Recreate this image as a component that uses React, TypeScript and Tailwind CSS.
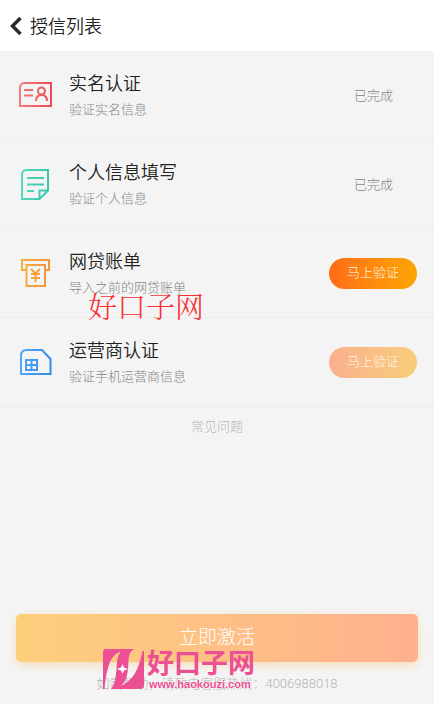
import type { ReactNode } from 'react';

type Row = {
  title: string;
  note: string;
  icon: ReactNode;
  state: 'done' | 'ready' | 'waiting';
};

function Gradient({ id, from, to }: { id: string; from: string; to: string }) {
  return (
    <defs>
      <linearGradient id={id} x1="0" y1="0" x2="36" y2="0" gradientUnits="userSpaceOnUse">
        <stop offset="0" stopColor={from} />
        <stop offset="1" stopColor={to} />
      </linearGradient>
    </defs>
  );
}

function IdCardIcon() {
  return (
    <svg viewBox="0 0 36 36" className="size-9 shrink-0" fill="none" stroke="url(#red)" strokeWidth="2" aria-hidden="true">
      <Gradient id="red" from="#f5807c" to="#e8484e" />
      <path d="M7 6H33V29H2V11Q2 6 7 6Z" />
      <path d="M6 13H15M6 18.500H15" />
      <circle cx="23.500" cy="14" r="3.500" />
      <path d="M18 24Q18 18 23.500 18Q29 18 29 24" />
    </svg>
  );
}

function NoteIcon() {
  return (
    <svg viewBox="0 0 36 36" className="size-9 shrink-0" fill="none" stroke="url(#green)" strokeWidth="2" aria-hidden="true">
      <Gradient id="green" from="#5ad9c2" to="#35c2a8" />
      <path d="M9 4H30V24.500L21.500 33H4V9Q4 4 9 4Z" />
      <path d="M9 12H26M9 18.500H26M9 25H16M21.500 33V24.500H30" />
    </svg>
  );
}

function BillIcon() {
  return (
    <svg viewBox="0 0 36 36" className="size-9 shrink-0" fill="none" stroke="url(#amber)" strokeWidth="2" aria-hidden="true">
      <Gradient id="amber" from="#f9b13c" to="#f38f3c" />
      <path d="M8 15H4V5H31V15H27" />
      <path d="M8.500 10H27V31H8.500Z" />
      <path d="M13 14L17.500 18.500L22 14M13 19H22M13 23H22M17.500 18.500V27" />
    </svg>
  );
}

function SimIcon() {
  return (
    <svg viewBox="0 0 36 36" className="size-9 shrink-0" fill="none" stroke="url(#blue)" strokeWidth="2" aria-hidden="true">
      <Gradient id="blue" from="#58a8f8" to="#2c88ea" />
      <path d="M8.500 6H24L32.500 15V30H3V11.500Q3 6 8.500 6Z" />
      <path d="M8 16H19V26H8ZM8 21H19M13.500 16V26" />
    </svg>
  );
}

const rows: Row[] = [
  { title: '实名认证', note: '验证实名信息', icon: <IdCardIcon />, state: 'done' },
  { title: '个人信息填写', note: '验证个人信息', icon: <NoteIcon />, state: 'done' },
  { title: '网贷账单', note: '导入之前的网贷账单', icon: <BillIcon />, state: 'ready' },
  { title: '运营商认证', note: '验证手机运营商信息', icon: <SimIcon />, state: 'waiting' },
];

function RowAction({ state }: { state: Row['state'] }) {
  if (state === 'done') {
    return <span className="mr-6 pt-0.5 text-[13px] text-[#858585]">已完成</span>;
  }
  const fill =
    state === 'ready' ? 'from-[#ff6c16] to-[#fca500]' : 'from-[#fab08e] to-[#f8cd78]';
  return (
    <button
      type="button"
      disabled={state === 'waiting'}
      className={`h-[31px] rounded-full bg-linear-to-r px-[18px] text-[13px] text-[#fff8ea] ${fill}`}
    >
      马上验证
    </button>
  );
}

function Watermark() {
  return (
    <div className="pointer-events-none absolute top-[35px] left-[103px] flex items-start gap-[3px] text-left text-[#ec4f93]">
      <svg viewBox="0 0 41 41" className="size-[41px]" aria-hidden="true">
        <path
          fill="currentColor"
          d="M3 0H31C24 4 26 12 25 20C24 29 22 34 17.500 37C30 32 36 20 39.500 2L41 2V37Q41 40 37 40H8C12 35 12.500 29 13.500 20C14 12 14 8 17.500 2.700C7 6 4 18 1.500 40L0 40V3Q0 0 3 0Z"
        />
        <path fill="#fff" d="M19.500 15L21 18.500L25 20L21 21.500L19.500 25L18 21.500L14 20L18 18.500Z" />
      </svg>
      <div className="pt-[3px]">
        <p className="text-[27px] leading-[25px] font-bold">好口子网</p>
        <p className="pl-0.5 font-['Liberation_Sans',sans-serif] text-[11px] leading-[14px] font-bold [text-shadow:0_0_1px_#fff,0_0_2px_#fff]">
          www.haokouzi.com
        </p>
      </div>
    </div>
  );
}

export default function App() {
  return (
    <div className="flex min-h-screen flex-col bg-[#f4f4f4] font-['Roboto','Noto_Sans_CJK_SC',sans-serif] font-light text-[#222]">
      <header className="flex h-[51px] items-center gap-2 bg-white pl-2.5">
        <button type="button" aria-label="返回">
          <svg viewBox="0 0 12 20" className="h-5 w-3" fill="none" stroke="#2b2b2b" strokeWidth="3.500" aria-hidden="true">
            <path d="M10.500 2L2.500 10L10.500 18" />
          </svg>
        </button>
        <h1 className="pt-0.5 text-lg font-[350]">授信列表</h1>
      </header>

      <main className="relative">
        <ul>
          {rows.map((row) => (
            <li key={row.title} className="flex h-[89px] items-center border-b border-[#eeeeee] pr-[17px] pl-[18px]">
              {row.icon}
              <div className="ml-[15px] flex-1 pt-0.5">
                <h2 className="text-lg leading-7 font-[350]">{row.title}</h2>
                <p className="text-[13px] leading-6 text-[#858585]">{row.note}</p>
              </div>
              <RowAction state={row.state} />
            </li>
          ))}
        </ul>
        <p className="pointer-events-none absolute top-[237px] left-[88px] font-['Noto_Serif_CJK_SC','Noto_Sans_CJK_SC',serif] text-[29px] leading-9 text-[#f92f35]">
          好口子网
        </p>
        <p className="pt-2 text-center text-[13px] leading-6">
          <a href="#faq" className="text-[#b5b5b5]">常见问题</a>
        </p>
      </main>

      <footer className="relative mt-auto px-4 pb-2 text-center">
        <button
          type="button"
          className="h-12 w-full rounded-[5px] bg-linear-to-r from-[#fcd07c] to-[#ffb08d] text-[19px] text-white shadow-[0_3px_8px_#f7dfb8]"
        >
          立即激活
        </button>
        <p className="mt-2.5 text-[13px] leading-6 text-[#b5b5b5]">如需帮助，请致电客服热线：4006988018</p>
        <Watermark />
      </footer>
    </div>
  );
}
